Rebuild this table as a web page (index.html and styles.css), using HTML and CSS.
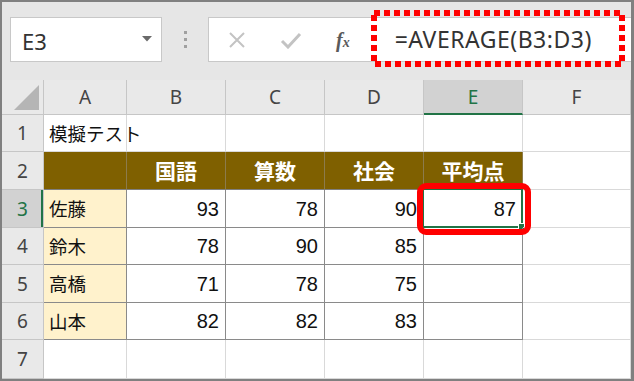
FILE: index.html
```html
<!DOCTYPE html>
<html lang="ja">
<head>
<meta charset="utf-8">
<link rel="stylesheet" href="styles.css">
</head>
<body>
<div class="frame">
  <div class="toolbar">
    <div class="namebox">
      <span class="nb-text">E3</span>
      <svg class="nb-arrow" width="10" height="6" viewBox="0 0 10 6"><path d="M0 0H10L5 5.5Z" fill="#6a6a6a"/></svg>
    </div>
    <div class="grip"><i></i><i></i><i></i></div>
    <div class="fbar">
      <svg class="ic-x" width="18" height="18" viewBox="0 0 18 18"><path d="M2 2L16 16M16 2L2 16" stroke="#c3c3c3" stroke-width="2" fill="none"/></svg>
      <svg class="ic-ok" width="22" height="18" viewBox="0 0 22 18"><path d="M2 10L8 16L20 3" stroke="#c3c3c3" stroke-width="3" fill="none"/></svg>
      <span class="ic-fx">f<span class="fx-x">x</span></span>
      <span class="formula">=AVERAGE(B3:D3)</span>
    </div>
  </div>

  <div class="sheet">
    <div class="corner"><svg width="25" height="25" viewBox="0 0 25 25"><path d="M25 0V25H0Z" fill="#b5b5b5"/></svg></div>
    <div class="ch">A</div>
    <div class="ch">B</div>
    <div class="ch">C</div>
    <div class="ch">D</div>
    <div class="ch sel">E</div>
    <div class="ch">F</div>

    <div class="rh">1</div>
    <div class="c txt">模擬テスト</div>
    <div class="c"></div>
    <div class="c"></div>
    <div class="c"></div>
    <div class="c"></div>
    <div class="c"></div>

    <div class="rh">2</div>
    <div class="c hd"></div>
    <div class="c hd">国語</div>
    <div class="c hd">算数</div>
    <div class="c hd">社会</div>
    <div class="c hd">平均点</div>
    <div class="c"></div>

    <div class="rh sel">3</div>
    <div class="c tb nm">佐藤</div>
    <div class="c tb num">93</div>
    <div class="c tb num">78</div>
    <div class="c tb num">90</div>
    <div class="c tb num active">87<span class="selbox"><span class="handle"></span></span></div>
    <div class="c"></div>

    <div class="rh">4</div>
    <div class="c tb nm">鈴木</div>
    <div class="c tb num">78</div>
    <div class="c tb num">90</div>
    <div class="c tb num">85</div>
    <div class="c tb num"></div>
    <div class="c"></div>

    <div class="rh">5</div>
    <div class="c tb nm">高橋</div>
    <div class="c tb num">71</div>
    <div class="c tb num">78</div>
    <div class="c tb num">75</div>
    <div class="c tb num"></div>
    <div class="c"></div>

    <div class="rh">6</div>
    <div class="c tb nm">山本</div>
    <div class="c tb num">82</div>
    <div class="c tb num">82</div>
    <div class="c tb num">83</div>
    <div class="c tb num"></div>
    <div class="c"></div>

    <div class="rh">7</div>
    <div class="c"></div>
    <div class="c"></div>
    <div class="c"></div>
    <div class="c"></div>
    <div class="c"></div>
    <div class="c"></div>
  </div>

  <svg class="callout-dots" width="254" height="57" viewBox="0 0 254 57">
    <rect x="3" y="3" width="248" height="51" fill="none" stroke="#ff0000" stroke-width="6" stroke-dasharray="6 4"/>
  </svg>
  <div class="callout-cell"></div>
</div>
</body>
</html>
```

FILE: styles.css
```css
* { box-sizing: border-box; }
html, body { margin: 0; padding: 0; }
body { width: 634px; height: 381px; overflow: hidden; background: #808080; }

.frame {
  position: relative;
  width: 634px;
  height: 381px;
  border-style: solid;
  border-color: #808080;
  border-width: 2px 3px 2px 2px;
  background: #e6e6e6;
  font-family: "Noto Sans", "Liberation Sans", sans-serif;
  overflow: hidden;
}

/* ---------- formula toolbar ---------- */
.toolbar {
  display: flex;
  align-items: flex-start;
  height: 78px;
  padding: 15px 0 0 8px;
}
.namebox {
  width: 152px;
  height: 45px;
  background: #fff;
  border: 1px solid #c8c8c8;
  display: flex;
  align-items: center;
  justify-content: space-between;
  padding: 3px 9px 0 11px;
}
.nb-text { font-size: 22px; color: #333; line-height: 1; }
.nb-arrow { margin-top: -5px; }

.grip {
  width: 46px;
  height: 45px;
  display: flex;
  flex-direction: column;
  align-items: center;
  justify-content: center;
  gap: 4px;
}
.grip i { display: block; width: 3px; height: 3px; background: #a0a0a0; }

.fbar {
  flex: 1;
  height: 45px;
  background: #fff;
  border: 1px solid #c8c8c8;
  border-right: none;
  display: flex;
  align-items: center;
  padding-left: 19px;
}
.ic-x { margin-right: 34px; }
.ic-ok { margin-right: 34px; }
.ic-fx {
  font-family: "Liberation Serif", serif;
  font-style: italic;
  font-weight: bold;
  font-size: 20px;
  color: #5a5a5a;
  line-height: 1;
}
.fx-x { font-size: 14px; }
.formula {
  margin-left: 45px;
  font-size: 23px;
  letter-spacing: 0.5px;
  color: #333;
  line-height: 1;
}

/* ---------- sheet grid ---------- */
.sheet {
  display: grid;
  grid-template-columns: 42px 83px 99px 99px 99px 99px 1fr;
  grid-template-rows: 35px 37px 38px 38px 37px 38px 37px 1fr;
  height: 299px;
  background: #fff;
}
.corner, .ch, .rh {
  background: #e9e9e9;
  border-right: 1px solid #c6c6c6;
  border-bottom: 1px solid #c6c6c6;
  color: #444;
  font-size: 19px;
  display: flex;
  align-items: center;
  justify-content: center;
}
.corner { align-items: flex-end; justify-content: flex-end; padding: 0 4px 4px 0; }
.corner svg { display: block; }
.ch.sel {
  background: #d2d2d2;
  color: #217346;
  border-bottom: 2px solid #217346;
}
.rh.sel {
  background: #d2d2d2;
  color: #217346;
  box-shadow: inset -2px 0 0 #217346;
}

.c {
  border-right: 1px solid #d9d9d9;
  border-bottom: 1px solid #d9d9d9;
  font-family: "Noto Sans CJK JP", sans-serif;
  font-size: 19px;
  color: #111;
  display: flex;
  align-items: center;
  line-height: 1;
  position: relative;
  white-space: nowrap;
}
.c.txt { padding-left: 5px; font-size: 18.5px; overflow: visible; z-index: 1; }
.c.hd {
  background: #7f6000;
  color: #fff;
  font-weight: bold;
  font-size: 21px;
  justify-content: center;
  border-right-color: #8c7b4c;
  border-bottom-color: #7f7f7f;
}
.c.tb { border-right-color: #8a8a8a; border-bottom-color: #8a8a8a; }
.c.nm { background: #fff2cc; padding-left: 5px; font-size: 18.5px; }
.c.num { justify-content: flex-end; padding-right: 6px; font-family: "Liberation Sans", sans-serif; font-size: 20px; }

.selbox {
  position: absolute;
  left: -2px;
  top: -2px;
  right: -1px;
  bottom: -1px;
  border: 2px solid #217346;
}
.handle {
  position: absolute;
  right: -4px;
  bottom: -4px;
  width: 7px;
  height: 7px;
  background: #217346;
  border: 1px solid #fff;
}

/* ---------- annotations ---------- */
.callout-dots { position: absolute; left: 369px; top: 8px; }
.callout-cell {
  position: absolute;
  left: 415px;
  top: 181px;
  width: 114px;
  height: 52px;
  border: 6px solid #ff0000;
  border-radius: 9px;
}
```
